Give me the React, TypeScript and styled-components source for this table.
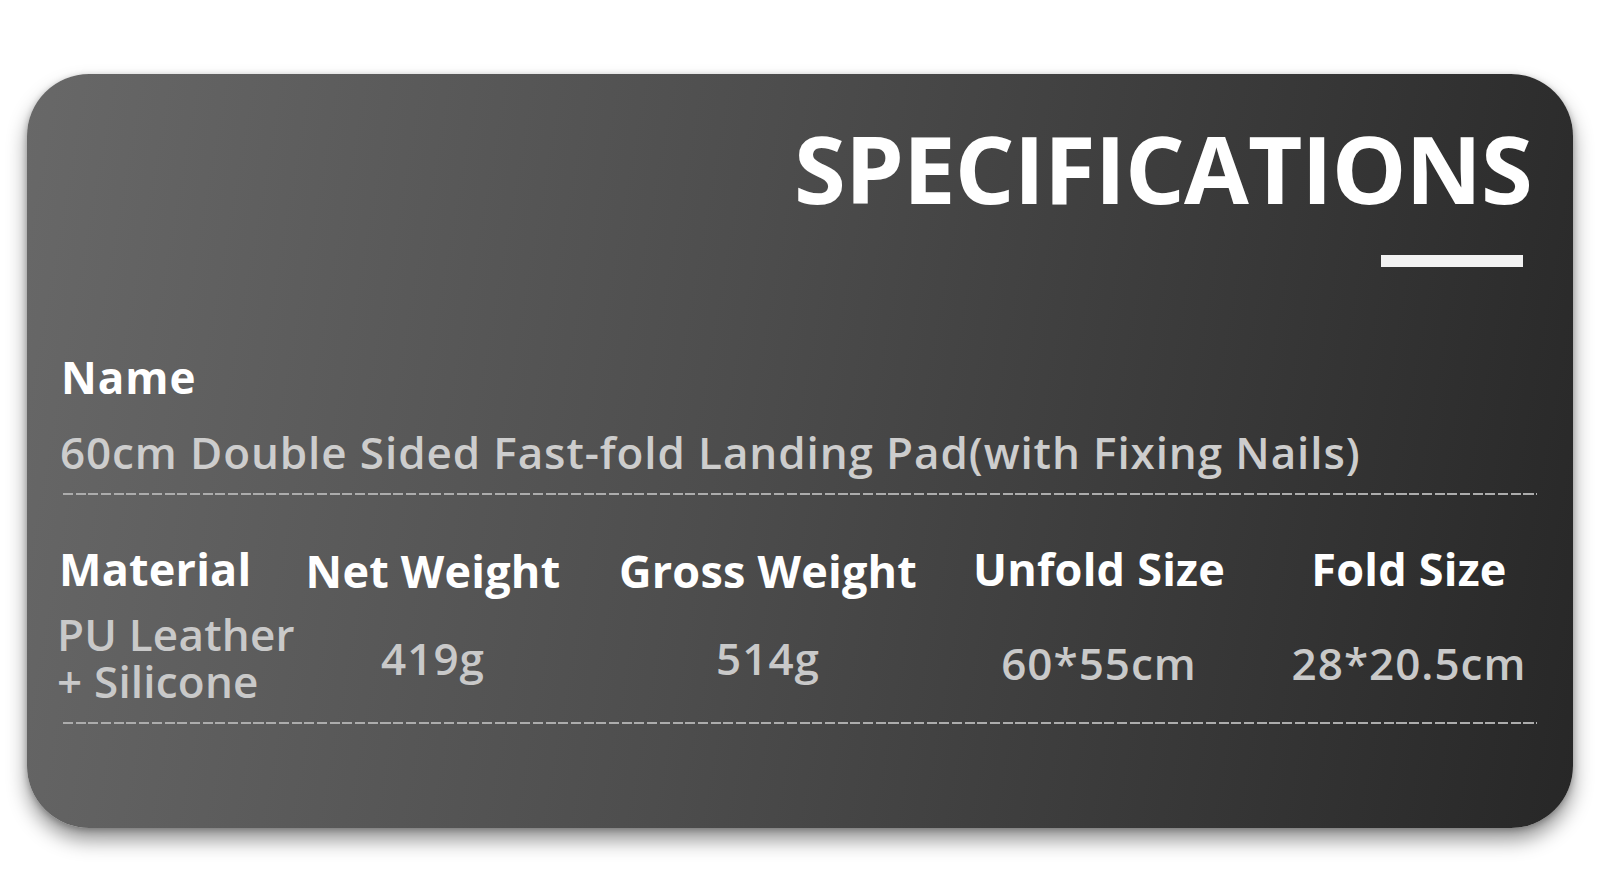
import React from "react";
import styled, { createGlobalStyle } from "styled-components";

const GlobalStyle = createGlobalStyle`
  html, body {
    margin: 0;
    padding: 0;
    background: #ffffff;
    font-family: "Open Sans", "Noto Sans", sans-serif;
  }
  * { box-sizing: border-box; }
`;

const Page = styled.div`
  width: 1600px;
  height: 891px;
  padding: 74px 0 0 27px;
  background: #ffffff;
  overflow: hidden;
`;

const Card = styled.section`
  width: 1546px;
  height: 754px;
  border-radius: 62px;
  background: linear-gradient(100deg, #686868 0%, #4d4d4d 45%, #272727 100%);
  box-shadow: 0 12px 20px rgba(0, 0, 0, 0.42), 0 2px 6px rgba(0, 0, 0, 0.25);
  padding: 47px 41px 0 32px;
  display: flex;
  flex-direction: column;
`;

const Header = styled.header`
  display: flex;
  flex-direction: column;
  align-items: flex-end;
`;

const Title = styled.h1`
  margin: 0;
  font-size: 94px;
  line-height: 94px;
  font-weight: 700;
  color: #ffffff;
  letter-spacing: -0.9px;
`;

const Bar = styled.div`
  width: 142px;
  height: 12px;
  margin-top: 40px;
  margin-right: 9px;
  background: #f2f2f2;
`;

const Label = styled.div<{ $top?: number }>`
  margin: ${(p) => p.$top ?? 0}px 0 0 2px;
  font-size: 44px;
  line-height: 44px;
  font-weight: 700;
  letter-spacing: 1px;
  color: #ffffff;
  white-space: nowrap;
`;

const Description = styled.div`
  margin: 31px 0 0 1px;
  font-size: 44px;
  line-height: 44px;
  font-weight: 600;
  letter-spacing: 0.9px;
  color: #cdcdcd;
  white-space: nowrap;
`;

const Dashed = styled.div<{ $top: number }>`
  margin: ${(p) => p.$top}px 0 0 4px;
  width: 1474px;
  height: 2px;
  background: repeating-linear-gradient(
    to right,
    #acacac 0,
    #acacac 10px,
    transparent 10px,
    transparent 12.7px
  );
`;

const SpecGrid = styled.div`
  margin-top: 51px;
  display: grid;
  grid-template-columns: 222px 304px 366px 296px 324px;
  grid-template-rows: 45px 94px;
  row-gap: 20px;
`;

const HeadCell = styled.div<{ $align: "left" | "center"; $drop?: number }>`
  min-width: 0;
  display: flex;
  justify-content: ${(p) => (p.$align === "left" ? "flex-start" : "center")};
  padding-top: ${(p) => p.$drop ?? 0}px;
  font-size: 45px;
  line-height: 45px;
  font-weight: 700;
  letter-spacing: 0.2px;
  color: #ffffff;
  white-space: nowrap;
`;

const ValueCell = styled.div<{ $align: "left" | "center"; $drop?: number }>`
  min-width: 0;
  display: flex;
  flex-direction: column;
  justify-content: center;
  align-items: ${(p) => (p.$align === "left" ? "flex-start" : "center")};
  padding-top: ${(p) => p.$drop ?? 0}px;
  margin-left: ${(p) => (p.$align === "left" ? -2 : 0)}px;
  font-size: 44px;
  line-height: 47px;
  font-weight: 600;
  letter-spacing: ${(p) => (p.$align === "left" ? 0.2 : 1)}px;
  color: #c9c9c9;
  white-space: nowrap;
`;

const specs: {
  head: string;
  value: string[];
  align: "left" | "center";
  headDrop?: number;
  valueDrop?: number;
}[] = [
  { head: "Material", value: ["PU Leather", "+ Silicone"], align: "left" },
  { head: "Net Weight", value: ["419g"], align: "center", headDrop: 2 },
  { head: "Gross Weight", value: ["514g"], align: "center", headDrop: 2 },
  { head: "Unfold Size", value: ["60*55cm"], align: "center", valueDrop: 10 },
  { head: "Fold Size", value: ["28*20.5cm"], align: "center", valueDrop: 10 },
];

export default function App() {
  return (
    <>
      <GlobalStyle />
      <Page>
        <Card>
          <Header>
            <Title>SPECIFICATIONS</Title>
            <Bar />
          </Header>
          <Label $top={88}>Name</Label>
          <Description>
            60cm Double Sided Fast-fold Landing Pad(with Fixing Nails)
          </Description>
          <Dashed $top={19} />
          <SpecGrid>
            {specs.map((s) => (
              <HeadCell key={s.head} $align={s.align} $drop={s.headDrop}>
                {s.head}
              </HeadCell>
            ))}
            {specs.map((s) => (
              <ValueCell key={s.head + "-v"} $align={s.align} $drop={s.valueDrop}>
                {s.value.map((line) => (
                  <span key={line}>{line}</span>
                ))}
              </ValueCell>
            ))}
          </SpecGrid>
          <Dashed $top={17} />
        </Card>
      </Page>
    </>
  );
}
